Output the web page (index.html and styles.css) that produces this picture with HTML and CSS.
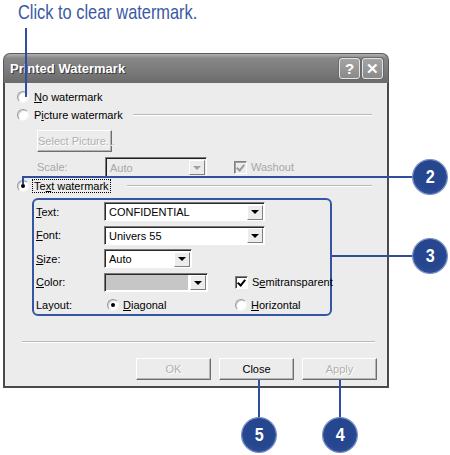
FILE: index.html
```html
<html>
  <head>
    <meta charset="utf-8" />
    <title>Printed Watermark</title>
    <link rel="stylesheet" href="styles.css">
  </head>
  <body>
    <div class="caption"><span>Click to clear watermark.</span></div>

    <div class="dialog">
      <div class="titlebar">
        <span class="title">Printed Watermark</span>
        <div class="title-buttons">
          <span class="tbtn">?</span>
          <span class="tbtn">✕</span>
        </div>
      </div>

      <div class="content">
        <div class="row">
          <span class="radio"></span>
          <span class="label"><u>N</u>o watermark</span>
        </div>
        <div class="row">
          <span class="radio"></span>
          <span class="label">P<u>i</u>cture watermark</span>
          <span class="sep"></span>
        </div>

        <div class="indent">
          <button class="btn disabled select-pic">Select Picture...</button>
          <div class="scale-row">
            <span class="field-label muted">Scale:</span>
            <span class="combo combo-off scale">
              <span class="value">Auto</span>
              <span class="arrow"><i></i></span>
            </span>
            <span class="check check-off"></span>
            <span class="label muted">Washout</span>
          </div>
        </div>

        <div class="row">
          <span class="radio checked"></span>
          <span class="label focus">Te<u>x</u>t watermark</span>
          <span class="sep sep-text"></span>
        </div>

        <div class="group">
          <div class="grow">
            <span class="field-label"><u>T</u>ext:</span>
            <span class="combo wide">
              <span class="value">CONFIDENTIAL</span>
              <span class="arrow"><i></i></span>
            </span>
          </div>
          <div class="grow">
            <span class="field-label"><u>F</u>ont:</span>
            <span class="combo wide">
              <span class="value">Univers 55</span>
              <span class="arrow"><i></i></span>
            </span>
          </div>
          <div class="grow">
            <span class="field-label"><u>S</u>ize:</span>
            <span class="combo size">
              <span class="value">Auto</span>
              <span class="arrow"><i></i></span>
            </span>
          </div>
          <div class="grow">
            <span class="field-label"><u>C</u>olor:</span>
            <span class="cell">
              <span class="combo color">
                <span class="value swatch"></span>
                <span class="arrow"><i></i></span>
              </span>
            </span>
            <span class="check checked"></span>
            <span class="label">S<u>e</u>mitransparent</span>
          </div>
          <div class="grow">
            <span class="field-label">Layout:</span>
            <span class="cell">
              <span class="radio checked"></span>
              <span class="label"><u>D</u>iagonal</span>
            </span>
            <span class="radio"></span>
            <span class="label"><u>H</u>orizontal</span>
          </div>
        </div>

        <div class="footer-sep"></div>
        <div class="buttons">
          <button class="btn disabled">OK</button>
          <button class="btn">Close</button>
          <button class="btn disabled">Apply</button>
        </div>
      </div>
    </div>

    <!-- callouts -->
    <div class="line" style="left:25px;top:28px;width:2px;height:69px"></div>
    <div class="line" style="left:22px;top:176px;width:392px;height:2px"></div>
    <div class="line" style="left:22px;top:176px;width:2px;height:8px"></div>
    <div class="line" style="left:332px;top:255px;width:82px;height:2px"></div>
    <div class="line" style="left:258px;top:380px;width:2px;height:40px"></div>
    <div class="line" style="left:339px;top:380px;width:2px;height:40px"></div>

    <div class="bubble" style="left:413px;top:160px"><span>2</span></div>
    <div class="bubble" style="left:413px;top:239px"><span>3</span></div>
    <div class="bubble" style="left:242px;top:418px"><span>5</span></div>
    <div class="bubble" style="left:323px;top:418px"><span>4</span></div>
  </body>
</html>
```

FILE: styles.css
```css
* {
  box-sizing: border-box;
  margin: 0;
  padding: 0;
}

body {
  width: 450px;
  height: 455px;
  background: #fff;
  position: relative;
  overflow: hidden;
  font-family: 'Liberation Sans', Arial, sans-serif;
  font-size: 11px;
  color: #000;
}

.caption {
  height: 26px;
  padding-left: 18px;
  color: #3a59a4;
  font-family: 'Liberation Sans', sans-serif;
  font-size: 21px;
  line-height: 24px;
  white-space: nowrap;
}

.caption span {
  display: inline-block;
  transform: scaleX(0.78);
  transform-origin: left center;
}

/* dialog window */
.dialog {
  margin: 27px 0 0 3px;
  width: 386px;
  height: 335px;
  display: flex;
  flex-direction: column;
}

.titlebar {
  height: 30px;
  display: flex;
  align-items: center;
  justify-content: space-between;
  padding: 0 5px 0 6px;
  border-radius: 7px 7px 0 0;
  background: linear-gradient(#b2b2b2 0%, #878787 14%, #7b7b7b 55%, #6b6b6b 100%);
  border: 1px solid #5a5a5a;
  border-bottom: none;
}

.title {
  color: #fff;
  font-weight: bold;
  font-size: 13px;
  text-shadow: 1px 1px 0 #3a3a3a;
}

.title-buttons {
  display: flex;
  gap: 2px;
}

.tbtn {
  width: 21px;
  height: 21px;
  display: flex;
  align-items: center;
  justify-content: center;
  border: 1px solid #e4e4e4;
  border-radius: 3px;
  background: linear-gradient(#a4a4a4, #8a8a8a);
  color: #fff;
  font-weight: bold;
  font-size: 15px;
  box-shadow: 0 0 0 1px #6a6a6a;
}

.content {
  flex: 1;
  background: #ececec;
  border: 2px solid #4a4a4a;
  border-top: none;
  padding: 5px 10px 0 12px;
}

.row {
  height: 18px;
  display: flex;
  align-items: center;
}

.label {
  margin-left: 5px;
  white-space: nowrap;
}

.focus {
  outline: 1px dotted #000;
  outline-offset: 0;
  padding: 0 1px;
  margin-left: 4px;
}

.muted {
  color: #a7a7a7;
}

.sep {
  flex: 1;
  margin: 0 5px 0 10px;
  height: 2px;
  border-top: 1px solid #b9b9b9;
  border-bottom: 1px solid #fff;
}

.sep-text {
  margin-left: 17px;
}

/* radio & checkbox */
.radio {
  width: 12px;
  height: 12px;
  flex: none;
  border-radius: 50%;
  background: #fff;
  border: 1px solid;
  border-color: #9a9a9a #f4f4f4 #f4f4f4 #9a9a9a;
  box-shadow: inset 1px 1px 0 #d0d0d0;
  position: relative;
}

.radio.checked::after {
  content: '';
  position: absolute;
  left: 3px;
  top: 3px;
  width: 4px;
  height: 4px;
  border-radius: 50%;
  background: #000;
}

.check {
  width: 13px;
  height: 13px;
  flex: none;
  background: #fff;
  border: 1px solid;
  border-color: #808080 #fff #fff #808080;
  box-shadow: inset 1px 1px 0 #404040;
  position: relative;
}

.check.checked::after,
.check-off::after {
  content: '';
  position: absolute;
  left: 3px;
  top: 1px;
  width: 3px;
  height: 6px;
  border: solid #000;
  border-width: 0 2px 2px 0;
  transform: rotate(40deg);
}

.check-off {
  background: #ececec;
  box-shadow: inset 1px 1px 0 #a0a0a0;
}

.check-off::after {
  border-color: #9a9a9a;
}

/* picture block */
.indent {
  padding-left: 20px;
}

.select-pic {
  margin-top: 6px;
  width: 102px;
  height: 21px;
}

.scale-row {
  margin-top: 5px;
  height: 20px;
  display: flex;
  align-items: center;
}

.scale-row .check {
  margin-left: 27px;
}

.scale-row .label {
  margin-left: 4px;
}

.field-label {
  width: 68px;
  flex: none;
}

/* combos */
.combo {
  height: 19px;
  display: flex;
  align-items: center;
  background: #fff;
  border: 1px solid;
  border-color: #7a7a7a #fff #fff #7a7a7a;
  box-shadow: inset 1px 1px 0 #2a2a2a;
  padding: 1px 1px 0 1px;
}

.combo .value {
  flex: 1;
  padding-left: 3px;
  white-space: nowrap;
}

.arrow {
  width: 16px;
  height: 15px;
  flex: none;
  background: #ececec;
  border: 1px solid;
  border-color: #fff #808080 #808080 #fff;
  display: flex;
  align-items: center;
  justify-content: center;
}

.arrow i {
  width: 0;
  height: 0;
  border-left: 4px solid transparent;
  border-right: 4px solid transparent;
  border-top: 4px solid #000;
}

.combo-off {
  width: 102px;
  height: 20px;
  background: #ececec;
  color: #a7a7a7;
  box-shadow: inset 1px 1px 0 #1e1e1e;
}

.combo-off .arrow i {
  border-top-color: #a0a0a0;
}

.wide {
  width: 161px;
}

.size {
  width: 88px;
}

.color {
  width: 104px;
}

.swatch {
  height: 15px;
  margin-right: 2px;
  background: #c6c6c6;
}

/* text watermark group */
.group {
  margin: 3px 0 0 15px;
  width: 300px;
  height: 118px;
  border: 2px solid #3457a3;
  border-radius: 6px;
  padding: 2px 0 0 2px;
  display: flex;
  flex-direction: column;
  gap: 4.5px;
}

.grow {
  height: 19px;
  display: flex;
  align-items: center;
}

.cell {
  width: 131px;
  flex: none;
  display: flex;
  align-items: center;
}

.cell .radio {
  margin-left: 3px;
}

.grow .check + .label,
.grow .radio + .label {
  margin-left: 4px;
}

/* footer */
.footer-sep {
  margin: 25px 2px 0 5px;
  height: 2px;
  border-top: 1px solid #b9b9b9;
  border-bottom: 1px solid #fff;
}

.buttons {
  margin-top: 15px;
  display: flex;
  justify-content: flex-end;
  gap: 8px;
}

.btn {
  width: 75px;
  height: 22px;
  padding: 0;
  white-space: nowrap;
  font-family: inherit;
  font-size: 11px;
  color: #000;
  background: #ececec;
  border: 1px solid;
  border-color: #fff #6e6e6e #6e6e6e #fff;
  box-shadow: inset -1px -1px 0 #b4b4b4;
}

.btn.disabled {
  color: #b0b0b0;
  text-shadow: 1px 1px 0 #fff;
}

/* callouts */
.line {
  position: absolute;
  background: #2f4f9e;
}

.bubble {
  position: absolute;
  width: 34px;
  height: 34px;
  border-radius: 50%;
  background: radial-gradient(circle at 50% 45%, #26468f 55%, #3a5ca6 100%);
  box-shadow: 0 0 0 1px #6f8bc4;
  display: flex;
  align-items: center;
  justify-content: center;
  color: #fff;
  font-family: 'Liberation Sans', sans-serif;
  font-weight: bold;
  font-size: 19px;
}

.bubble span {
  display: inline-block;
  transform: scaleX(0.85);
}
```
